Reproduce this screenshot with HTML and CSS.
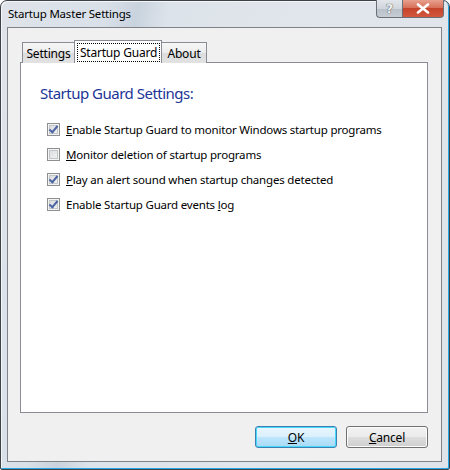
FILE: index.html
```html
<!DOCTYPE html>
<html>
<head>
<meta charset="utf-8">
<link rel="stylesheet" href="styles.css">
</head>
<body>
<div class="window">
  <div class="titlebar">
    <span class="title">Startup Master Settings</span>
    <div class="caption-buttons">
      <span class="cap-btn help">?</span>
      <span class="cap-btn close"><svg width="14" height="11" viewBox="0 0 14 11"><path d="M2 1.5 L12 9.5 M12 1.5 L2 9.5" stroke="#fff" stroke-width="2.6" stroke-linecap="round"/></svg></span>
    </div>
  </div>
  <div class="client">
    <div class="tabs">
      <div class="tab tab-settings">Settings</div>
      <div class="tab tab-active"><span class="focus">Startup Guard</span></div>
      <div class="tab tab-about">About</div>
    </div>
    <div class="panel">
      <div class="heading">Startup Guard Settings:</div>
      <ul class="options">
        <li class="option"><span class="check checked"></span><span class="label"><u>E</u>nable Startup Guard to monitor Windows startup programs</span></li>
        <li class="option"><span class="check"></span><span class="label"><u>M</u>onitor deletion of startup programs</span></li>
        <li class="option"><span class="check checked"></span><span class="label"><u>P</u>lay an alert sound when startup changes detected</span></li>
        <li class="option"><span class="check checked"></span><span class="label">Enable Startup Guard events <u>l</u>og</span></li>
      </ul>
    </div>
    <div class="buttons">
      <button class="btn btn-default"><u>O</u>K</button>
      <button class="btn"><u>C</u>ancel</button>
    </div>
  </div>
</div>
</body>
</html>
```

FILE: styles.css
```css
html, body {
  margin: 0;
  padding: 0;
  background: #ffffff;
}
body {
  font-family: "Segoe UI", "Noto Sans", "Open Sans", sans-serif;
  font-size: 11.5px;
  letter-spacing: -0.2px;
  color: #000;
}
.window {
  width: 450px;
  height: 470px;
  box-sizing: border-box;
  border: 1px solid #3c4248;
  border-radius: 7px 7px 2px 2px;
  background: linear-gradient(100deg, #dfe4ea 0%, #d9e0e8 20%, #c9d3de 26%, #dde3ea 32%, #e1e6ec 60%, #dfe4ea 100%);
  box-shadow: inset -1px -1px 0 #25a8e6, inset 1px 1px 0 #f4f6f8;
  padding: 0 7px 7px 6px;
  display: flex;
  flex-direction: column;
}
.titlebar {
  height: 26px;
  display: flex;
  align-items: flex-start;
  padding-left: 1px;
}
.title {
  margin-top: 5px;
  color: #000;
  white-space: nowrap;
}
.caption-buttons {
  margin-left: auto;
  margin-right: -2px;
  margin-top: -1px;
  display: flex;
}
.cap-btn {
  height: 18px;
  box-sizing: border-box;
  display: flex;
  align-items: center;
  justify-content: center;
  border: 1px solid #6b7078;
  border-top: none;
}
.help {
  width: 26px;
  border-radius: 0 0 0 4px;
  border-right: none;
  background: linear-gradient(#e2e6ea 0%, #d0d6dc 50%, #b9c0c8 51%, #c6ccd2 100%);
  color: #eef0f2;
  font-family: "DejaVu Sans", sans-serif;
  font-weight: bold;
  font-size: 13px;
  letter-spacing: 0;
  text-shadow: 0 0 1px #555, 0 0 1px #555;
}
.close {
  width: 42px;
  border-radius: 0 0 4px 0;
  background: linear-gradient(#e8a08e 0%, #d7705a 45%, #c5432a 50%, #d2583e 100%);
}
.client {
  flex: 1;
  border: 1px solid #7f8388;
  background: #f0f0f0;
  padding: 12px 13px 12px 12px;
  display: flex;
  flex-direction: column;
}
.tabs {
  display: flex;
  align-items: flex-end;
  padding-left: 2px;
  height: 23px;
  position: relative;
  z-index: 1;
  margin-bottom: -1px;
}
.tab {
  box-sizing: border-box;
  height: 21px;
  border: 1px solid #898c95;
  border-bottom: none;
  background: linear-gradient(#f6f6f6 0%, #ececec 50%, #dcdcdc 51%, #e2e2e2 100%);
  display: flex;
  align-items: center;
  justify-content: center;
  padding-top: 1px;
  font-size: 12px;
}
.tab-settings {
  width: 53px;
}
.tab-active {
  width: 88px;
  height: 23px;
  margin-left: -1px;
  background: #ffffff;
  border-color: #898c95;
  padding: 2px 1px 1px 2px;
  position: relative;
  z-index: 2;
}
.focus {
  flex: 1;
  align-self: stretch;
  display: flex;
  align-items: center;
  justify-content: center;
  outline: 1px dotted #000;
  outline-offset: -1px;
}
.tab-about {
  width: 46px;
  margin-left: -1px;
}
.panel {
  height: 351px;
  box-sizing: border-box;
  border: 1px solid #898c95;
  background: #ffffff;
  padding: 19px 19px 0 19px;
}
.heading {
  font-size: 15px;
  letter-spacing: -0.5px;
  color: #1c3596;
  line-height: 22px;
}
.options {
  list-style: none;
  margin: 13px 0 0 0;
  padding: 0 0 0 7px;
}
.option {
  display: flex;
  align-items: center;
  height: 25px;
}
.check {
  width: 13px;
  height: 13px;
  box-sizing: border-box;
  border: 1px solid #8e8f8f;
  background: linear-gradient(135deg, #d8dadb 0%, #f4f4f4 100%);
  box-shadow: inset 0 0 0 1px #f4f4f4, inset 0 0 0 2px #c3c6c9;
  margin-right: 6px;
  position: relative;
}
.check.checked::after {
  content: "";
  position: absolute;
  left: 3px;
  top: 0px;
  width: 3px;
  height: 7px;
  border: solid #4a64a4;
  border-width: 0 2px 2px 0;
  transform: rotate(40deg);
}
.label {
  white-space: nowrap;
}
.buttons {
  display: flex;
  justify-content: flex-end;
  gap: 9px;
  margin-top: 13px;
}
.btn {
  width: 82px;
  height: 22px;
  box-sizing: border-box;
  border: 1px solid #707070;
  border-radius: 3px;
  background: linear-gradient(#f2f2f2 0%, #ebebeb 50%, #dddddd 51%, #cfcfcf 100%);
  box-shadow: inset 0 0 0 1px #fcfcfc;
  font-family: inherit;
  font-size: 12px;
  letter-spacing: -0.2px;
  color: #000;
  padding: 0;
}
.btn-default {
  border-color: #3c7fb1;
  box-shadow: inset 0 0 0 1px #48d8fb;
  background: linear-gradient(#eaf6fd 0%, #d9f0fc 50%, #bee6fd 51%, #a7d9f5 100%);
}
```
